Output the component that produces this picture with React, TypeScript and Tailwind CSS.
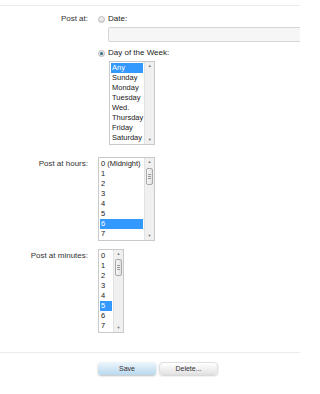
import React from "react";

const days = ["Any", "Sunday", "Monday", "Tuesday", "Wed.", "Thursday", "Friday", "Saturday"];
const hours = ["0 (Midnight)", "1", "2", "3", "4", "5", "6", "7"];
const minutes = ["0", "1", "2", "3", "4", "5", "6", "7"];

function Radio({ checked }: { checked?: boolean }) {
  return (
    <span className="w-[7px] h-[7px] rounded-full border border-[#b8b8b8] bg-gradient-to-b from-[#f4f4f4] to-[#dcdcdc] flex items-center justify-center shrink-0">
      {checked && <span className="w-[3px] h-[3px] rounded-full bg-[#2f6f86]" />}
    </span>
  );
}

function ScrollBar({ thumb }: { thumb?: number }) {
  return (
    <div className="w-[10px] bg-[#f0f0f0] border-l border-[#e2e2e2] flex flex-col items-center justify-between py-[2px] relative">
      <span className="text-[4px] leading-[4px] text-[#777]">▲</span>
      {thumb !== undefined && (
        <div
          className="absolute left-[1px] w-[7px] h-[17px] rounded-[2px] border border-[#a9a9a9] bg-gradient-to-r from-[#f7f7f7] to-[#e2e2e2] flex flex-col items-center justify-center gap-[1px]"
          style={{ top: thumb }}
        >
          <span className="w-[3px] h-px bg-[#999]" />
          <span className="w-[3px] h-px bg-[#999]" />
          <span className="w-[3px] h-px bg-[#999]" />
        </div>
      )}
      <span className="text-[4px] leading-[4px] text-[#777]">▼</span>
    </div>
  );
}

function ListBox({
  items,
  selected,
  width,
  thumb,
}: {
  items: string[];
  selected: number;
  width: string;
  thumb?: number;
}) {
  return (
    <div className={`${width} h-[84px] border border-[#c9c9c9] bg-white flex`}>
      <div className="flex-1 p-[1px]">
        {items.map((it, i) => (
          <div
            key={it}
            className={`h-[10px] leading-[10px] pl-[1px] text-[7.5px] whitespace-nowrap ${
              i === selected ? "bg-[#3399ff] text-white" : "text-[#222]"
            }`}
          >
            {it}
          </div>
        ))}
      </div>
      <ScrollBar thumb={thumb} />
    </div>
  );
}

function Label({ children }: { children: React.ReactNode }) {
  return (
    <div className="w-[88px] shrink-0 text-right text-[8px] leading-[10px] text-[#333]">{children}</div>
  );
}

export default function App() {
  return (
    <div
      className="w-[300px] h-[394px] bg-white overflow-hidden text-[#222]"
      style={{ fontFamily: '"Liberation Sans", Arial, sans-serif' }}
    >
      <div className="h-[6px] border-b border-[#e6ecf0]" />

      {/* Post at */}
      <div className="flex pt-[8px]">
        <Label>Post at:</Label>
        <div className="ml-[10px] flex-1">
          <div className="h-[10px] flex items-center gap-[3px] text-[8px]">
            <Radio />
            <span>Date:</span>
          </div>
          <div className="mt-[3px] ml-[10px] h-[15px] w-[220px] border border-[#d6d6d6] rounded-[2px] bg-[#f6f6f6]" />
          <div className="mt-[6px] h-[10px] flex items-center gap-[3px] text-[8px]">
            <Radio checked />
            <span>Day of the Week:</span>
          </div>
          <div className="mt-[3px] ml-[11px]">
            <ListBox items={days} selected={0} width="w-[46px]" />
          </div>
        </div>
      </div>

      {/* Post at hours */}
      <div className="flex mt-[12px]">
        <div className="pt-[2px]">
          <Label>Post at hours:</Label>
        </div>
        <div className="ml-[10px]">
          <ListBox items={hours} selected={6} width="w-[57px]" thumb={10} />
        </div>
      </div>

      {/* Post at minutes */}
      <div className="flex mt-[8px]">
        <div className="pt-[2px]">
          <Label>Post at minutes:</Label>
        </div>
        <div className="ml-[10px]">
          <ListBox items={minutes} selected={5} width="w-[26px]" thumb={9} />
        </div>
      </div>

      <div className="mt-[19px] border-t border-[#e6ecf0]" />

      <div className="mt-[9px] ml-[98px] flex gap-[3px]">
        <button className="w-[58px] h-[13px] rounded-[3px] bg-gradient-to-b from-[#eef6fc] to-[#b9d8ee] shadow-[0_1px_2px_rgba(0,0,0,0.25)] text-[7px] leading-[13px] text-[#333]">
          Save
        </button>
        <button className="w-[59px] h-[13px] rounded-[4px] bg-gradient-to-b from-[#ffffff] to-[#e4e4e4] border border-[#e0e0e0] shadow-[0_1px_2px_rgba(0,0,0,0.2)] text-[7px] leading-[11px] text-[#333]">
          Delete...
        </button>
      </div>
    </div>
  );
}
